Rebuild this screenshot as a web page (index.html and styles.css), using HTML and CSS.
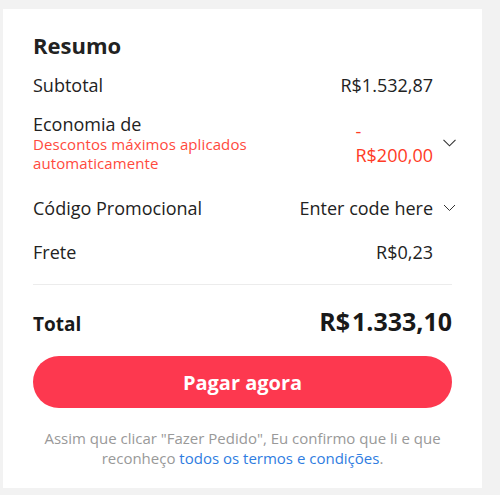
FILE: index.html
```html
<!DOCTYPE html>
<html lang="pt-BR">
<head>
<meta charset="utf-8">
<title>Resumo</title>
<link rel="stylesheet" href="styles.css">
</head>
<body>
<section class="card">
  <h2 class="title">Resumo</h2>
  <div class="row row-subtotal">
    <span class="label">Subtotal</span>
    <div class="right"><span class="value">R$1.532,87</span><span class="icon-slot"></span></div>
  </div>
  <div class="row row-discount">
    <div class="label-block">
      <div class="label label-tight">Economia de</div>
      <div class="note">Descontos máximos aplicados automaticamente</div>
    </div>
    <div class="right">
      <span class="value value-red">- R$200,00</span>
      <span class="icon-slot"><svg class="chev" width="13" height="8" viewBox="0 0 13 8"><polyline points="0.5,0.8 6.5,6.8 12.5,0.8" fill="none" stroke="#333" stroke-width="1.1"/></svg></span>
    </div>
  </div>
  <div class="row row-code">
    <span class="label">Código Promocional</span>
    <div class="right">
      <span class="value">Enter code here</span>
      <span class="icon-slot"><svg class="chev" width="13" height="8" viewBox="0 0 13 8"><polyline points="1,1 6.5,6.5 12,1" fill="none" stroke="#333" stroke-width="1"/></svg></span>
    </div>
  </div>
  <div class="row row-ship">
    <span class="label">Frete</span>
    <div class="right"><span class="value">R$0,23</span><span class="icon-slot"></span></div>
  </div>
  <hr class="sep">
  <div class="total">
    <span class="total-label">Total</span>
    <span class="total-value"><span class="cur">R$</span>1.333,10</span>
  </div>
  <button class="pay" type="button">Pagar agora</button>
  <p class="terms">Assim que clicar "Fazer Pedido", Eu confirmo que li e que reconheço <a href="#" class="link">todos os termos e condições</a>.</p>
</section>
</body>
</html>
```

FILE: styles.css
```css
* { box-sizing: border-box; }
html, body {
  margin: 0;
  padding: 0;
  background: #f2f2f2;
  font-family: "Open Sans", "Noto Sans", sans-serif;
  color: #222;
}
.card {
  margin: 9px 0 0 3px;
  width: 479px;
  height: 479px;
  background: #fff;
  padding: 22px 30px 20px 30px;
  display: flex;
  flex-direction: column;
}
.title {
  margin: 0;
  font-size: 22px;
  line-height: 28px;
  font-weight: 700;
  color: #222;
}
.row {
  display: flex;
  justify-content: space-between;
  align-items: center;
  margin-right: -4px;
  font-size: 18px;
  line-height: 24px;
}
.row-subtotal { margin-top: 14px; }
.row-discount { margin-top: 16px; }
.row-code { margin-top: 23px; }
.row-ship { margin-top: 20px; }
.label-block { display: flex; flex-direction: column; width: 230px; }
.label-tight { line-height: 22px; }
.note {
  font-size: 15px;
  line-height: 19px;
  letter-spacing: 0.1px;
  color: #ff4a3d;
}
.right { display: flex; align-items: center; }
.value { white-space: nowrap; }
.value-red {
  white-space: normal;
  width: min-content;
  color: #ff3b26;
  line-height: 24px;
  min-width: 77px;
}
.icon-slot {
  width: 23px;
  display: flex;
  justify-content: flex-end;
  align-items: center;
}
.chev { display: block; }
.sep {
  border: 0;
  border-top: 1px solid #ececec;
  margin: 20px 0 0 0;
  height: 0;
}
.total {
  margin-top: 20px;
  display: flex;
  justify-content: space-between;
  align-items: baseline;
  line-height: 32px;
}
.total-label { font-size: 19px; font-weight: 700; color: #191919; }
.total-value { font-size: 25px; font-weight: 700; color: #191919; }
.cur { margin-right: 2px; }
.pay {
  margin-top: 16px;
  height: 55px;
  width: 100%;
  border: 0;
  border-radius: 28px;
  background: #fd384f;
  color: #fff;
  font-family: inherit;
  font-size: 20px;
  font-weight: 700;
}
.terms {
  margin: 20px 0 0 0;
  text-align: center;
  font-size: 15px;
  line-height: 20px;
  color: #999;
}
.link { color: #2f7de1; text-decoration: none; }
```
